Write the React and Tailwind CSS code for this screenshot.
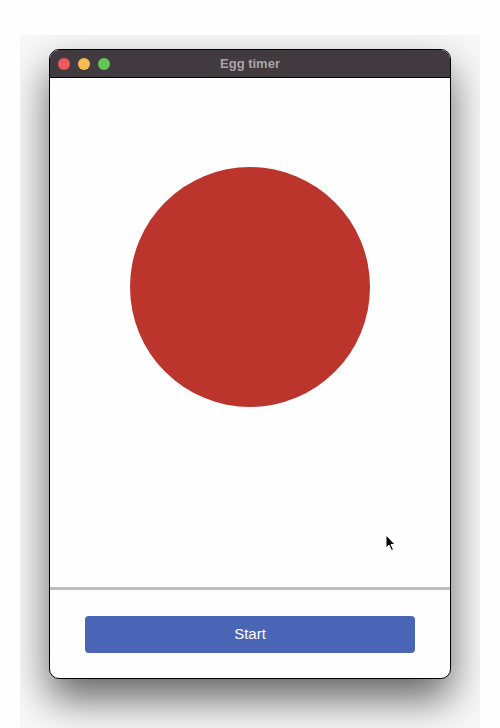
import React from "react";

const Cursor = () => (
  <svg width="12" height="18" viewBox="0 0 12 18" className="absolute left-[335px] top-[484px]">
    <path d="M1 1 L1 14 L4 11 L6.5 16.5 L8.5 15.5 L6 10.5 L10 10.5 Z" fill="#000" stroke="#fff" strokeWidth="1" />
  </svg>
);

export default function App() {
  return (
    <div className="w-[500px] h-[728px] bg-[#fefefe] pt-[35px] pl-[20px] font-['Liberation_Sans',sans-serif]">
      <div className="w-[460px] h-[693px] overflow-hidden bg-[#f8f8f8] pt-[14px] pl-[29px]">
        <div className="relative w-[402px] h-[630px] rounded-[10px] border border-black bg-[#fefefe] overflow-hidden shadow-[0_20px_40px_rgba(0,0,0,0.6)] flex flex-col">
          {/* title bar */}
          <div className="relative h-[28px] bg-[#413a3f] border-b border-black flex items-center pl-[8px] gap-[8px]">
            <span className="w-[12px] h-[12px] rounded-full bg-[#ee5a5e]" />
            <span className="w-[12px] h-[12px] rounded-full bg-[#f5bd4f]" />
            <span className="w-[12px] h-[12px] rounded-full bg-[#62c554]" />
            <div className="absolute inset-0 flex items-center justify-center text-[13px] font-bold text-[#a8a4a7]">
              Egg timer
            </div>
          </div>
          {/* main */}
          <div className="h-[509px] flex justify-center pt-[89px]">
            <div className="w-[240px] h-[240px] rounded-full bg-[#bc352c]" />
          </div>
          <div className="h-[3px] bg-[#bdbdbd]" />
          <div className="flex-1 px-[35px] pt-[26px]">
            <button className="w-full h-[37px] rounded-[4px] bg-[#4a64b6] text-white text-[15px]">
              Start
            </button>
          </div>
          <Cursor />
        </div>
      </div>
    </div>
  );
}
